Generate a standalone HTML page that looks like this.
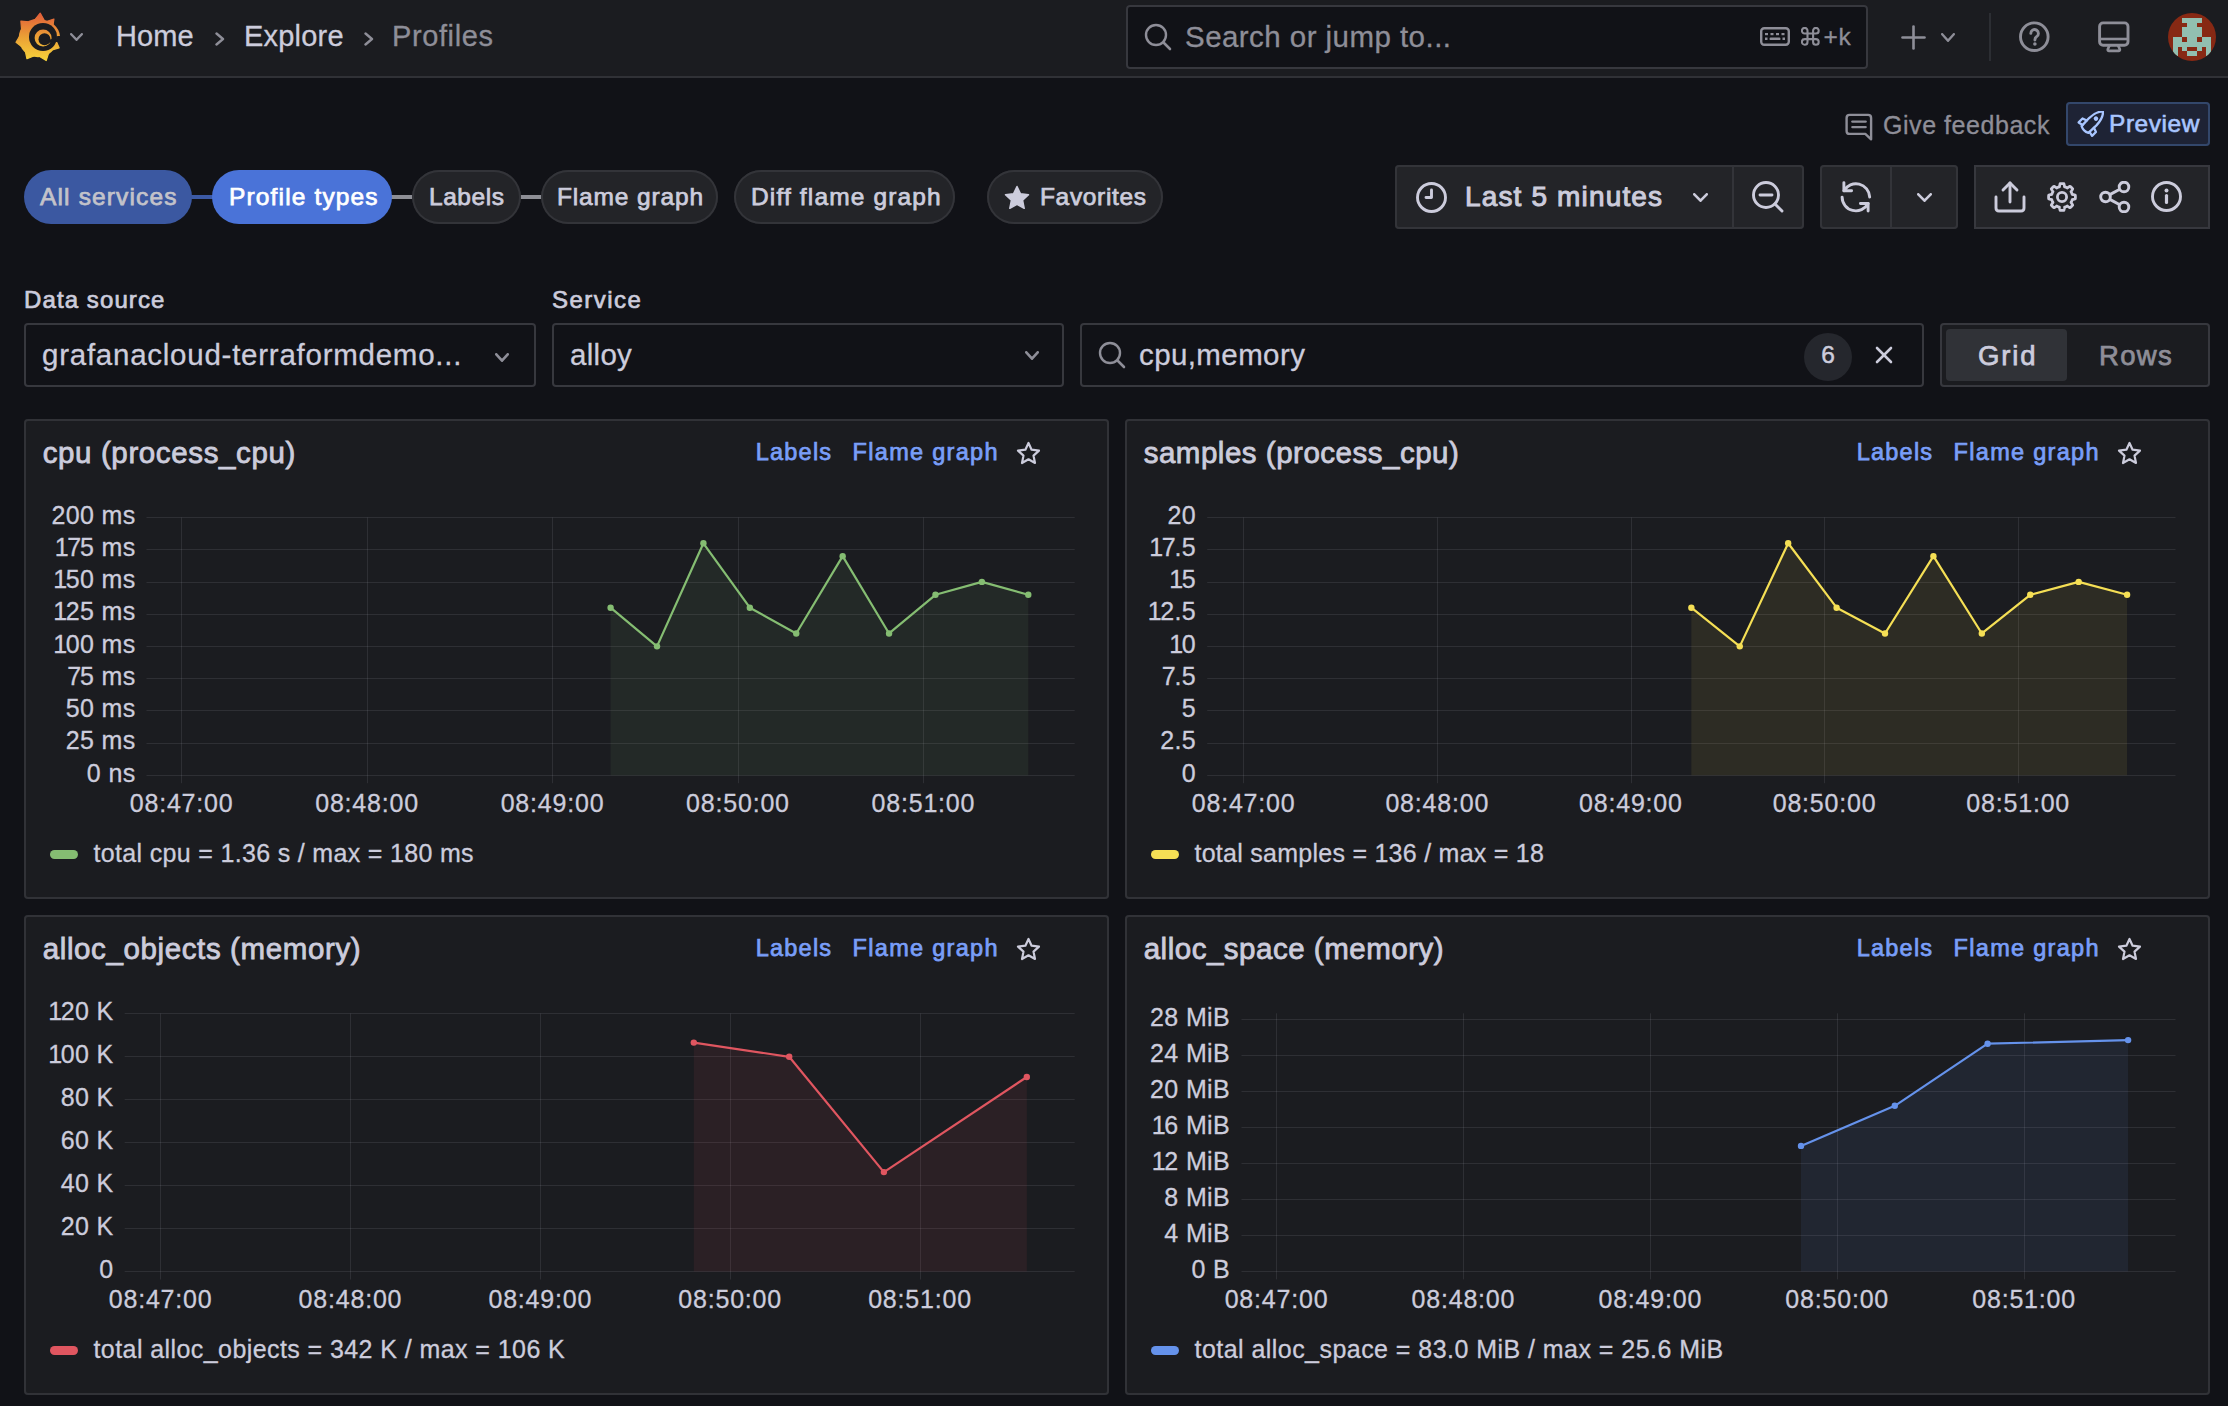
<!DOCTYPE html><html><head><meta charset="utf-8"><style>html,body{margin:0;padding:0;}body{width:2228px;height:1406px;overflow:hidden;background:#111217;position:relative;font-family:"Liberation Sans",sans-serif;}.t{position:absolute;white-space:pre;}.b{position:absolute;box-sizing:border-box;}</style></head><body>
<div class="b" style="left:0px;top:0px;width:2228px;height:76px;background:#1b1c20;border-radius:0px;"></div>
<div class="b" style="left:0px;top:76px;width:2228px;height:2px;background:#303136;border-radius:0px;"></div>
<svg class="b" style="left:12px;top:9px;" width="52" height="56" viewBox="0 0 52 56"><defs><linearGradient id="lg" x1="0" y1="53" x2="0" y2="3" gradientUnits="userSpaceOnUse">
<stop offset="0" stop-color="#f7d63b"/><stop offset="0.5" stop-color="#eba035"/><stop offset="1" stop-color="#e0593a"/></linearGradient></defs><g fill="url(#lg)"><polygon points="22.79,10.78 28.18,4.10 32.33,11.62" stroke="url(#lg)" stroke-width="1.2" stroke-linejoin="round"/><polygon points="34.40,12.52 41.94,10.00 40.77,17.87" stroke="url(#lg)" stroke-width="1.2" stroke-linejoin="round"/><polygon points="44.22,32.21 47.12,38.85 40.17,40.89" stroke="url(#lg)" stroke-width="1.2" stroke-linejoin="round"/><polygon points="36.61,44.15 34.21,51.55 27.61,47.43" stroke="url(#lg)" stroke-width="1.2" stroke-linejoin="round"/><polygon points="21.84,47.03 14.97,49.75 13.38,42.53" stroke="url(#lg)" stroke-width="1.2" stroke-linejoin="round"/><polygon points="9.52,37.40 4.01,33.27 7.57,27.39" stroke="url(#lg)" stroke-width="1.2" stroke-linejoin="round"/><polygon points="9.59,20.46 8.88,12.18 17.17,12.74" stroke="url(#lg)" stroke-width="1.2" stroke-linejoin="round"/><circle cx="26" cy="29" r="19.3"/><path d="M31,11.5 A17.5 17.5 0 0 1 48,27 L44.8,27 A14 14 0 0 0 31,14 Z"/></g><circle cx="31" cy="28" r="14" fill="#1b1c20"/><path d="M44.5,28 L50,28.5 L50,33 L43.5,33 Z" fill="#1b1c20"/><circle cx="31.1" cy="28.9" r="8.5" fill="url(#lg)"/><circle cx="32.5" cy="30.200000000000003" r="6.0" fill="#1b1c20"/><path d="M34.5,35.2 L39.8,32.5 L40,30 L37,31 Z" fill="#1b1c20"/></svg>
<svg class="b" style="left:70px;top:33px;" width="13" height="8" viewBox="0 0 13 8"><polyline points="1.2,1.2 6.5,6.8 11.8,1.2" fill="none" stroke="#8e8e98" stroke-width="2.4" stroke-linecap="round" stroke-linejoin="round"/></svg>
<div class="t" style="left:116px;top:22.45px;font-size:29px;line-height:29px;color:#ccccdc;font-weight:400;letter-spacing:0.1px;-webkit-text-stroke:0.3px #ccccdc;">Home</div>
<svg class="b" style="left:215px;top:32px;" width="10" height="14" viewBox="0 0 10 14"><polyline points="1.5,1.5 8,7 1.5,12.5" fill="none" stroke="#8e8e98" stroke-width="2.4" stroke-linecap="round" stroke-linejoin="round"/></svg>
<div class="t" style="left:244px;top:22.45px;font-size:29px;line-height:29px;color:#ccccdc;font-weight:400;letter-spacing:0.2px;-webkit-text-stroke:0.3px #ccccdc;">Explore</div>
<svg class="b" style="left:364px;top:32px;" width="10" height="14" viewBox="0 0 10 14"><polyline points="1.5,1.5 8,7 1.5,12.5" fill="none" stroke="#8e8e98" stroke-width="2.4" stroke-linecap="round" stroke-linejoin="round"/></svg>
<div class="t" style="left:392px;top:22.45px;font-size:29px;line-height:29px;color:#8e8e98;font-weight:400;letter-spacing:0.6px;-webkit-text-stroke:0.3px #8e8e98;">Profiles</div>
<div class="b" style="left:1126px;top:5px;width:742px;height:64px;background:#111217;border-radius:4px;box-shadow:inset 0 0 0 2px #37383e;"></div>
<svg class="b" style="left:1144px;top:23px;" width="28" height="28" viewBox="0 0 28 28"><circle cx="12" cy="12" r="10" fill="none" stroke="#8e8e98" stroke-width="2.4"/><line x1="19.5" y1="19.5" x2="26" y2="26" stroke="#8e8e98" stroke-width="2.6" stroke-linecap="round"/></svg>
<div class="t" style="left:1185px;top:22.03px;font-size:29.5px;line-height:29.5px;color:#8e8e98;font-weight:400;letter-spacing:0.45px;-webkit-text-stroke:0.3px #8e8e98;">Search or jump to...</div>
<svg class="b" style="left:1760px;top:27px;" width="30" height="19" viewBox="0 0 30 19"><rect x="1.2" y="1.2" width="27.6" height="16.6" rx="3" fill="none" stroke="#8e8e98" stroke-width="2.4"/><rect x="5.0" y="6" width="3" height="2.2" fill="#8e8e98"/><rect x="10.5" y="6" width="3" height="2.2" fill="#8e8e98"/><rect x="16.0" y="6" width="3" height="2.2" fill="#8e8e98"/><rect x="21.5" y="6" width="3" height="2.2" fill="#8e8e98"/><rect x="9.5" y="10.5" width="11" height="2.6" rx="1.2" fill="#8e8e98"/><rect x="5" y="10.5" width="2.5" height="2.5" fill="#8e8e98"/><rect x="22.5" y="10.5" width="2.5" height="2.5" fill="#8e8e98"/></svg>
<svg class="b" style="left:1801px;top:27px;" width="19" height="19" viewBox="0 0 19 19"><path d="M6.5 6.5 V3.7 A2.8 2.8 0 1 0 3.7 6.5 H6.5 M12.1 6.5 V3.7 A2.8 2.8 0 1 1 14.9 6.5 H12.1 M12.1 12.1 V14.9 A2.8 2.8 0 1 0 14.9 12.1 H12.1 M6.5 12.1 V14.9 A2.8 2.8 0 1 1 3.7 12.1 H6.5 M6.5 6.5 H12.1 V12.1 H6.5 Z" fill="none" stroke="#8e8e98" stroke-width="2.1"/></svg>
<div class="t" style="left:1823.5px;top:24.56px;font-size:24.5px;line-height:24.5px;color:#8e8e98;font-weight:400;letter-spacing:0.6px;-webkit-text-stroke:0.3px #8e8e98;">+k</div>
<svg class="b" style="left:1901px;top:25px;" width="25" height="25" viewBox="0 0 25 25"><line x1="12.5" y1="1.5" x2="12.5" y2="23.5" stroke="#8e8e98" stroke-width="2.6" stroke-linecap="round"/><line x1="1.5" y1="12.5" x2="23.5" y2="12.5" stroke="#8e8e98" stroke-width="2.6" stroke-linecap="round"/></svg>
<svg class="b" style="left:1941px;top:33px;" width="14" height="9" viewBox="0 0 14 9"><polyline points="1.2,1.2 7.0,7.8 12.8,1.2" fill="none" stroke="#8e8e98" stroke-width="2.4" stroke-linecap="round" stroke-linejoin="round"/></svg>
<div class="b" style="left:1989px;top:13px;width:2px;height:48px;background:#2c2e33;border-radius:0px;"></div>
<svg class="b" style="left:2019px;top:21px;" width="31" height="31" viewBox="0 0 31 31"><circle cx="15.3" cy="15.7" r="13.8" fill="none" stroke="#8e8e98" stroke-width="2.9"/><path d="M11.8 12.4 A3.8 3.8 0 1 1 17.5 15.7 C16.4 16.4 15.9 17.1 15.9 19.0" fill="none" stroke="#8e8e98" stroke-width="2.9" stroke-linecap="round"/><circle cx="15.9" cy="23.0" r="1.8" fill="#8e8e98"/></svg>
<svg class="b" style="left:2098px;top:21px;" width="32" height="32" viewBox="0 0 32 32"><rect x="1.6" y="1.9" width="28.4" height="22.4" rx="3.5" fill="none" stroke="#8e8e98" stroke-width="2.9"/><line x1="2" y1="18" x2="29.5" y2="18" stroke="#8e8e98" stroke-width="2.6"/><path d="M11.5 24.5 L9.8 28.3 Q9.5 29.8 11 29.8 H20.6 Q22.1 29.8 21.8 28.3 L20.1 24.5" fill="none" stroke="#8e8e98" stroke-width="2.7" stroke-linejoin="round"/></svg>
<svg class="b" style="left:2168px;top:13px;" width="48" height="48" viewBox="0 0 48 48"><defs><clipPath id="avc"><circle cx="24" cy="24" r="24"/></clipPath></defs><g clip-path="url(#avc)"><rect width="48" height="48" fill="#872914"/><rect x="14.40" y="4.80" width="19.20" height="4.80" fill="#92bfb0" shape-rendering="crispEdges"/><rect x="19.20" y="9.60" width="9.60" height="4.80" fill="#92bfb0" shape-rendering="crispEdges"/><rect x="14.40" y="14.40" width="19.20" height="4.80" fill="#92bfb0" shape-rendering="crispEdges"/><rect x="14.40" y="19.20" width="19.20" height="4.80" fill="#92bfb0" shape-rendering="crispEdges"/><rect x="4.80" y="24.00" width="9.60" height="4.80" fill="#92bfb0" shape-rendering="crispEdges"/><rect x="19.20" y="24.00" width="9.60" height="4.80" fill="#92bfb0" shape-rendering="crispEdges"/><rect x="33.60" y="24.00" width="9.60" height="4.80" fill="#92bfb0" shape-rendering="crispEdges"/><rect x="4.80" y="28.80" width="38.40" height="4.80" fill="#92bfb0" shape-rendering="crispEdges"/><rect x="4.80" y="33.60" width="4.80" height="4.80" fill="#92bfb0" shape-rendering="crispEdges"/><rect x="14.40" y="33.60" width="4.80" height="4.80" fill="#92bfb0" shape-rendering="crispEdges"/><rect x="28.80" y="33.60" width="4.80" height="4.80" fill="#92bfb0" shape-rendering="crispEdges"/><rect x="38.40" y="33.60" width="4.80" height="4.80" fill="#92bfb0" shape-rendering="crispEdges"/><rect x="4.80" y="38.40" width="4.80" height="4.80" fill="#92bfb0" shape-rendering="crispEdges"/><rect x="19.20" y="38.40" width="9.60" height="4.80" fill="#92bfb0" shape-rendering="crispEdges"/><rect x="38.40" y="38.40" width="4.80" height="4.80" fill="#92bfb0" shape-rendering="crispEdges"/></g></svg>
<svg class="b" style="left:1845px;top:112px;" width="28" height="29" viewBox="0 0 28 29"><path d="M4.6 2.9 H23.1 Q26.1 2.9 26.1 5.9 V27.3 L20.3 21.9 H4.6 Q1.6 21.9 1.6 18.9 V5.9 Q1.6 2.9 4.6 2.9 Z" fill="none" stroke="#8e8e98" stroke-width="2.4" stroke-linejoin="round"/><line x1="7.4" y1="9.6" x2="20.6" y2="9.6" stroke="#8e8e98" stroke-width="2.4" stroke-linecap="round"/><line x1="7.4" y1="15.1" x2="20.6" y2="15.1" stroke="#8e8e98" stroke-width="2.4" stroke-linecap="round"/></svg>
<div class="t" style="left:1883px;top:112.84px;font-size:25px;line-height:25px;color:#8e8e98;font-weight:400;letter-spacing:0.55px;-webkit-text-stroke:0.3px #8e8e98;">Give feedback</div>
<div class="b" style="left:2066px;top:102px;width:144px;height:44px;background:#1e2335;border-radius:4px;box-shadow:inset 0 0 0 2px #33476b;"></div>
<svg class="b" style="left:2077px;top:111px;" width="27" height="27" viewBox="0 0 27 27"><g transform="translate(8,18.5) rotate(-45)" fill="none" stroke="#a9c6ff" stroke-width="2.3" stroke-linejoin="round" stroke-linecap="round"><path d="M0 -4.8 L11 -5.2 Q21 -4.8 25.5 0 Q21 4.8 11 5.2 L0 4.8 Q-2.5 0 0 -4.8 Z"/><path d="M1.5 -4.9 L0.5 -9.5 L6 -9.5 L7.5 -5.1"/><path d="M1.5 4.9 L0.5 9.5 L6 9.5 L7.5 5.1"/><circle cx="15.5" cy="0" r="1.1" fill="#a9c6ff"/></g></svg>
<div class="t" style="left:2109px;top:111.76px;font-size:24.5px;line-height:24.5px;color:#a9c6ff;font-weight:400;letter-spacing:0.55px;-webkit-text-stroke:0.6px #a9c6ff;">Preview</div>
<div class="b" style="left:190px;top:195px;width:24px;height:4px;background:#3c5aa6;border-radius:0px;"></div>
<div class="b" style="left:390px;top:195px;width:24px;height:4px;background:#8d8e95;border-radius:0px;"></div>
<div class="b" style="left:519px;top:195px;width:24px;height:4px;background:#8d8e95;border-radius:0px;"></div>
<div class="b" style="left:24px;top:170px;width:168px;height:54px;background:#3b58a1;border-radius:27px;"></div>
<div class="t" style="left:40px;top:184.56px;font-size:24.5px;line-height:24.5px;color:#c3c3ca;font-weight:400;letter-spacing:1.15px;-webkit-text-stroke:0.75px #c3c3ca;">All services</div>
<div class="b" style="left:212px;top:170px;width:180px;height:54px;background:#4a73d8;border-radius:27px;"></div>
<div class="t" style="left:229px;top:184.56px;font-size:24.5px;line-height:24.5px;color:#ffffff;font-weight:400;letter-spacing:1.15px;-webkit-text-stroke:0.75px #ffffff;">Profile types</div>
<div class="b" style="left:412px;top:170px;width:109px;height:54px;background:#232428;border-radius:27px;box-shadow:inset 0 0 0 2px #333439;"></div>
<div class="t" style="left:429px;top:184.56px;font-size:24.5px;line-height:24.5px;color:#ccccdc;font-weight:400;letter-spacing:0.55px;-webkit-text-stroke:0.75px #ccccdc;">Labels</div>
<div class="b" style="left:541px;top:170px;width:177px;height:54px;background:#232428;border-radius:27px;box-shadow:inset 0 0 0 2px #333439;"></div>
<div class="t" style="left:557px;top:184.56px;font-size:24.5px;line-height:24.5px;color:#ccccdc;font-weight:400;letter-spacing:0.85px;-webkit-text-stroke:0.75px #ccccdc;">Flame graph</div>
<div class="b" style="left:734px;top:170px;width:221px;height:54px;background:#232428;border-radius:27px;box-shadow:inset 0 0 0 2px #333439;"></div>
<div class="t" style="left:751px;top:184.56px;font-size:24.5px;line-height:24.5px;color:#ccccdc;font-weight:400;letter-spacing:1.15px;-webkit-text-stroke:0.75px #ccccdc;">Diff flame graph</div>
<div class="b" style="left:987px;top:170px;width:176px;height:54px;background:#232428;border-radius:27px;box-shadow:inset 0 0 0 2px #333439;"></div>
<svg class="b" style="left:1004px;top:184.7px;" width="26" height="25" viewBox="0 0 26 25"><polygon points="13,1.5 16.5,8.8 24.5,9.8 18.6,15.3 20.2,23.3 13,19.3 5.8,23.3 7.4,15.3 1.5,9.8 9.5,8.8" fill="#ccccdc" stroke="#ccccdc" stroke-width="1.5" stroke-linejoin="round"/></svg>
<div class="t" style="left:1040px;top:184.56px;font-size:24.5px;line-height:24.5px;color:#ccccdc;font-weight:400;letter-spacing:0.65px;-webkit-text-stroke:0.75px #ccccdc;">Favorites</div>
<div class="b" style="left:1395px;top:165px;width:409px;height:64px;background:#232428;border-radius:4px;box-shadow:inset 0 0 0 2px #333439;"></div>
<div class="b" style="left:1732px;top:167px;width:2px;height:60px;background:#333439;border-radius:0px;"></div>
<svg class="b" style="left:1416px;top:182px;" width="31" height="31" viewBox="0 0 31 31"><circle cx="15.5" cy="15.5" r="14" fill="none" stroke="#ccccdc" stroke-width="2.9"/><polyline points="15.5,8 15.5,15.5 10,15.5" fill="none" stroke="#ccccdc" stroke-width="2.9" stroke-linecap="round" stroke-linejoin="round"/></svg>
<div class="t" style="left:1465px;top:183.30px;font-size:28px;line-height:28px;color:#ccccdc;font-weight:400;letter-spacing:1.15px;-webkit-text-stroke:1.0px #ccccdc;">Last 5 minutes</div>
<svg class="b" style="left:1693px;top:193px;" width="15" height="9" viewBox="0 0 15 9"><polyline points="1.3,1.3 7.5,7.7 13.7,1.3" fill="none" stroke="#ccccdc" stroke-width="2.6" stroke-linecap="round" stroke-linejoin="round"/></svg>
<svg class="b" style="left:1752px;top:181px;" width="32" height="32" viewBox="0 0 32 32"><circle cx="14" cy="14" r="12.5" fill="none" stroke="#ccccdc" stroke-width="2.9"/><line x1="8" y1="14" x2="20" y2="14" stroke="#ccccdc" stroke-width="2.9" stroke-linecap="round"/><line x1="23" y1="23" x2="30" y2="30" stroke="#ccccdc" stroke-width="2.9" stroke-linecap="round"/></svg>
<div class="b" style="left:1820px;top:165px;width:138px;height:64px;background:#232428;border-radius:4px;box-shadow:inset 0 0 0 2px #333439;"></div>
<div class="b" style="left:1890px;top:167px;width:2px;height:60px;background:#333439;border-radius:0px;"></div>
<svg class="b" style="left:1840px;top:181px;" width="32" height="32" viewBox="0 0 32 32"><g fill="none" stroke="#ccccdc" stroke-width="2.9" stroke-linecap="round" stroke-linejoin="round"><path d="M3.9 9.8 A13.8 13.8 0 0 1 29.7 16.1"/><path d="M2.1 16.1 A13.8 13.8 0 0 0 28.1 22.5"/><polyline points="3.9,1.6 3.9,9.8 11.6,9.8"/><polyline points="20.4,22.5 28.1,22.5 28.1,30.0"/></g></svg>
<svg class="b" style="left:1917px;top:193px;" width="15" height="9" viewBox="0 0 15 9"><polyline points="1.3,1.3 7.5,7.7 13.7,1.3" fill="none" stroke="#ccccdc" stroke-width="2.6" stroke-linecap="round" stroke-linejoin="round"/></svg>
<div class="b" style="left:1974px;top:165px;width:236px;height:64px;background:#232428;border-radius:0px;box-shadow:inset 0 0 0 2px #37383e;"></div>
<svg class="b" style="left:1994px;top:180px;" width="32" height="33" viewBox="0 0 32 33"><g fill="none" stroke="#ccccdc" stroke-width="2.9" stroke-linecap="round" stroke-linejoin="round"><path d="M2 17 V28 Q2 31 5 31 H27 Q30 31 30 28 V17"/><line x1="16" y1="3" x2="16" y2="22"/><polyline points="9,10 16,3 23,10"/></g></svg>
<svg class="b" style="left:2046px;top:181px;" width="32" height="32" viewBox="0 0 32 32"><g fill="none" stroke="#ccccdc" stroke-width="2.8" stroke-linejoin="round"><polygon points="29.40,16.00 29.40,16.23 29.39,16.47 29.38,16.70 29.37,16.93 29.35,17.17 29.33,17.40 29.30,17.63 29.27,17.86 28.76,18.02 28.24,18.16 27.73,18.28 27.22,18.38 26.70,18.47 26.19,18.54 26.14,18.72 26.09,18.89 26.04,19.07 25.99,19.24 25.93,19.42 25.87,19.59 25.80,19.76 25.74,19.93 25.67,20.10 25.59,20.27 25.52,20.44 25.44,20.60 25.36,20.77 25.27,20.93 25.18,21.09 25.09,21.25 25.00,21.41 25.31,21.82 25.62,22.25 25.91,22.68 26.18,23.13 26.45,23.59 26.70,24.06 26.56,24.25 26.41,24.43 26.26,24.61 26.11,24.79 25.96,24.97 25.80,25.14 25.64,25.31 25.48,25.48 25.31,25.64 25.14,25.80 24.97,25.96 24.79,26.11 24.61,26.26 24.43,26.41 24.25,26.56 24.06,26.70 23.59,26.45 23.13,26.18 22.68,25.91 22.25,25.62 21.82,25.31 21.41,25.00 21.25,25.09 21.09,25.18 20.93,25.27 20.77,25.36 20.60,25.44 20.44,25.52 20.27,25.59 20.10,25.67 19.93,25.74 19.76,25.80 19.59,25.87 19.42,25.93 19.24,25.99 19.07,26.04 18.89,26.09 18.72,26.14 18.54,26.19 18.47,26.70 18.38,27.22 18.28,27.73 18.16,28.24 18.02,28.76 17.86,29.27 17.63,29.30 17.40,29.33 17.17,29.35 16.93,29.37 16.70,29.38 16.47,29.39 16.23,29.40 16.00,29.40 15.77,29.40 15.53,29.39 15.30,29.38 15.07,29.37 14.83,29.35 14.60,29.33 14.37,29.30 14.14,29.27 13.98,28.76 13.84,28.24 13.72,27.73 13.62,27.22 13.53,26.70 13.46,26.19 13.28,26.14 13.11,26.09 12.93,26.04 12.76,25.99 12.58,25.93 12.41,25.87 12.24,25.80 12.07,25.74 11.90,25.67 11.73,25.59 11.56,25.52 11.40,25.44 11.23,25.36 11.07,25.27 10.91,25.18 10.75,25.09 10.59,25.00 10.18,25.31 9.75,25.62 9.32,25.91 8.87,26.18 8.41,26.45 7.94,26.70 7.75,26.56 7.57,26.41 7.39,26.26 7.21,26.11 7.03,25.96 6.86,25.80 6.69,25.64 6.52,25.48 6.36,25.31 6.20,25.14 6.04,24.97 5.89,24.79 5.74,24.61 5.59,24.43 5.44,24.25 5.30,24.06 5.55,23.59 5.82,23.13 6.09,22.68 6.38,22.25 6.69,21.82 7.00,21.41 6.91,21.25 6.82,21.09 6.73,20.93 6.64,20.77 6.56,20.60 6.48,20.44 6.41,20.27 6.33,20.10 6.26,19.93 6.20,19.76 6.13,19.59 6.07,19.42 6.01,19.24 5.96,19.07 5.91,18.89 5.86,18.72 5.81,18.54 5.30,18.47 4.78,18.38 4.27,18.28 3.76,18.16 3.24,18.02 2.73,17.86 2.70,17.63 2.67,17.40 2.65,17.17 2.63,16.93 2.62,16.70 2.61,16.47 2.60,16.23 2.60,16.00 2.60,15.77 2.61,15.53 2.62,15.30 2.63,15.07 2.65,14.83 2.67,14.60 2.70,14.37 2.73,14.14 3.24,13.98 3.76,13.84 4.27,13.72 4.78,13.62 5.30,13.53 5.81,13.46 5.86,13.28 5.91,13.11 5.96,12.93 6.01,12.76 6.07,12.58 6.13,12.41 6.20,12.24 6.26,12.07 6.33,11.90 6.41,11.73 6.48,11.56 6.56,11.40 6.64,11.23 6.73,11.07 6.82,10.91 6.91,10.75 7.00,10.59 6.69,10.18 6.38,9.75 6.09,9.32 5.82,8.87 5.55,8.41 5.30,7.94 5.44,7.75 5.59,7.57 5.74,7.39 5.89,7.21 6.04,7.03 6.20,6.86 6.36,6.69 6.52,6.52 6.69,6.36 6.86,6.20 7.03,6.04 7.21,5.89 7.39,5.74 7.57,5.59 7.75,5.44 7.94,5.30 8.41,5.55 8.87,5.82 9.32,6.09 9.75,6.38 10.18,6.69 10.59,7.00 10.75,6.91 10.91,6.82 11.07,6.73 11.23,6.64 11.40,6.56 11.56,6.48 11.73,6.41 11.90,6.33 12.07,6.26 12.24,6.20 12.41,6.13 12.58,6.07 12.76,6.01 12.93,5.96 13.11,5.91 13.28,5.86 13.46,5.81 13.53,5.30 13.62,4.78 13.72,4.27 13.84,3.76 13.98,3.24 14.14,2.73 14.37,2.70 14.60,2.67 14.83,2.65 15.07,2.63 15.30,2.62 15.53,2.61 15.77,2.60 16.00,2.60 16.23,2.60 16.47,2.61 16.70,2.62 16.93,2.63 17.17,2.65 17.40,2.67 17.63,2.70 17.86,2.73 18.02,3.24 18.16,3.76 18.28,4.27 18.38,4.78 18.47,5.30 18.54,5.81 18.72,5.86 18.89,5.91 19.07,5.96 19.24,6.01 19.42,6.07 19.59,6.13 19.76,6.20 19.93,6.26 20.10,6.33 20.27,6.41 20.44,6.48 20.60,6.56 20.77,6.64 20.93,6.73 21.09,6.82 21.25,6.91 21.41,7.00 21.82,6.69 22.25,6.38 22.68,6.09 23.13,5.82 23.59,5.55 24.06,5.30 24.25,5.44 24.43,5.59 24.61,5.74 24.79,5.89 24.97,6.04 25.14,6.20 25.31,6.36 25.48,6.52 25.64,6.69 25.80,6.86 25.96,7.03 26.11,7.21 26.26,7.39 26.41,7.57 26.56,7.75 26.70,7.94 26.45,8.41 26.18,8.87 25.91,9.32 25.62,9.75 25.31,10.18 25.00,10.59 25.09,10.75 25.18,10.91 25.27,11.07 25.36,11.23 25.44,11.40 25.52,11.56 25.59,11.73 25.67,11.90 25.74,12.07 25.80,12.24 25.87,12.41 25.93,12.58 25.99,12.76 26.04,12.93 26.09,13.11 26.14,13.28 26.19,13.46 26.70,13.53 27.22,13.62 27.73,13.72 28.24,13.84 28.76,13.98 29.27,14.14 29.30,14.37 29.33,14.60 29.35,14.83 29.37,15.07 29.38,15.30 29.39,15.53 29.40,15.77"/><circle cx="16" cy="16" r="4.6"/></g></svg>
<svg class="b" style="left:2099px;top:181px;" width="32" height="32" viewBox="0 0 32 32"><g fill="none" stroke="#ccccdc" stroke-width="2.9"><circle cx="6.5" cy="16" r="4.8"/><circle cx="25" cy="6" r="4.8"/><circle cx="25" cy="26" r="4.8"/><line x1="10.8" y1="13.6" x2="20.8" y2="8.3"/><line x1="10.8" y1="18.4" x2="20.8" y2="23.7"/></g></svg>
<svg class="b" style="left:2151px;top:181px;" width="32" height="32" viewBox="0 0 32 32"><circle cx="15.5" cy="15.5" r="14" fill="none" stroke="#ccccdc" stroke-width="2.9"/><line x1="15.5" y1="14.5" x2="15.5" y2="21.5" stroke="#ccccdc" stroke-width="3.2" stroke-linecap="round"/><circle cx="15.5" cy="9.6" r="2" fill="#ccccdc"/></svg>
<div class="t" style="left:24px;top:287.68px;font-size:24px;line-height:24px;color:#ccccdc;font-weight:400;letter-spacing:1.1px;-webkit-text-stroke:0.7px #ccccdc;">Data source</div>
<div class="t" style="left:552px;top:287.68px;font-size:24px;line-height:24px;color:#ccccdc;font-weight:400;letter-spacing:1.45px;-webkit-text-stroke:0.7px #ccccdc;">Service</div>
<div class="b" style="left:24px;top:323px;width:512px;height:64px;background:#111217;border-radius:4px;box-shadow:inset 0 0 0 2px #37383e;"></div>
<div class="t" style="left:42px;top:340.03px;font-size:29.5px;line-height:29.5px;color:#ccccdc;font-weight:400;letter-spacing:0.75px;-webkit-text-stroke:0.3px #ccccdc;">grafanacloud-terraformdemo...</div>
<svg class="b" style="left:495px;top:353px;" width="14" height="9" viewBox="0 0 14 9"><polyline points="1.3,1.3 7.0,7.7 12.7,1.3" fill="none" stroke="#8e8e98" stroke-width="2.6" stroke-linecap="round" stroke-linejoin="round"/></svg>
<div class="b" style="left:552px;top:323px;width:512px;height:64px;background:#111217;border-radius:4px;box-shadow:inset 0 0 0 2px #37383e;"></div>
<div class="t" style="left:570px;top:340.03px;font-size:29.5px;line-height:29.5px;color:#ccccdc;font-weight:400;letter-spacing:0.3px;-webkit-text-stroke:0.3px #ccccdc;">alloy</div>
<svg class="b" style="left:1025px;top:351px;" width="14" height="9" viewBox="0 0 14 9"><polyline points="1.3,1.3 7.0,7.7 12.7,1.3" fill="none" stroke="#8e8e98" stroke-width="2.6" stroke-linecap="round" stroke-linejoin="round"/></svg>
<div class="b" style="left:1080px;top:323px;width:844px;height:64px;background:#111217;border-radius:4px;box-shadow:inset 0 0 0 2px #37383e;"></div>
<svg class="b" style="left:1098px;top:341px;" width="28" height="28" viewBox="0 0 28 28"><circle cx="12" cy="12" r="10" fill="none" stroke="#8e8e98" stroke-width="2.4"/><line x1="19.5" y1="19.5" x2="26" y2="26" stroke="#8e8e98" stroke-width="2.6" stroke-linecap="round"/></svg>
<div class="t" style="left:1139px;top:340.03px;font-size:29.5px;line-height:29.5px;color:#ccccdc;font-weight:400;letter-spacing:0.4px;-webkit-text-stroke:0.3px #ccccdc;">cpu,memory</div>
<div class="b" style="left:1804px;top:333px;width:48px;height:48px;background:#25272d;border-radius:24px;"></div>
<div class="t" style="left:1528px;width:600px;top:343.26px;font-size:24.5px;line-height:24.5px;color:#ccccdc;font-weight:400;text-align:center;-webkit-text-stroke:0.5px #ccccdc;">6</div>
<svg class="b" style="left:1875px;top:346px;" width="18" height="18" viewBox="0 0 18 18"><g stroke="#ccccdc" stroke-width="2.6" stroke-linecap="round"><line x1="2" y1="2" x2="16" y2="16"/><line x1="16" y1="2" x2="2" y2="16"/></g></svg>
<div class="b" style="left:1940px;top:323px;width:270px;height:64px;background:#1b1c20;border-radius:4px;box-shadow:inset 0 0 0 2px #37383e;"></div>
<div class="b" style="left:1946px;top:329px;width:121px;height:52px;background:#303237;border-radius:4px;"></div>
<div class="t" style="left:1978px;top:341.72px;font-size:27.5px;line-height:27.5px;color:#ccccdc;font-weight:400;letter-spacing:1.85px;-webkit-text-stroke:0.75px #ccccdc;">Grid</div>
<div class="t" style="left:2099px;top:341.72px;font-size:27.5px;line-height:27.5px;color:#8e8e98;font-weight:400;letter-spacing:1.35px;-webkit-text-stroke:0.75px #8e8e98;">Rows</div>
<div class="b" style="left:24px;top:419px;width:1085px;height:480px;background:#1b1c20;border-radius:4px;box-shadow:inset 0 0 0 2px #313237;"></div>
<div class="t" style="left:42.7px;top:438.03px;font-size:29.5px;line-height:29.5px;color:#ccccdc;font-weight:400;letter-spacing:0.62px;-webkit-text-stroke:0.8px #ccccdc;">cpu (process_cpu)</div>
<div class="t" style="left:755.8px;top:440.81px;font-size:23.5px;line-height:23.5px;color:#799ef8;font-weight:400;letter-spacing:1.2px;-webkit-text-stroke:0.75px #799ef8;">Labels</div>
<div class="t" style="left:852.6px;top:440.81px;font-size:23.5px;line-height:23.5px;color:#799ef8;font-weight:400;letter-spacing:1.3px;-webkit-text-stroke:0.75px #799ef8;">Flame graph</div>
<svg class="b" style="left:1016px;top:441px;" width="25" height="24" viewBox="0 0 25 24"><polygon points="12.5,2 15.6,8.7 23,9.6 17.5,14.6 19,22 12.5,18.3 6,22 7.5,14.6 2,9.6 9.4,8.7" fill="none" stroke="#ccccdc" stroke-width="2.2" stroke-linejoin="round"/></svg>
<svg class="b" style="left:24px;top:419px;" width="1085" height="480" viewBox="0 0 1085 480"><line x1="122.5" y1="98.50" x2="1050.7" y2="98.50" stroke="rgba(200,205,215,0.11)" stroke-width="1"/><line x1="122.5" y1="130.50" x2="1050.7" y2="130.50" stroke="rgba(200,205,215,0.11)" stroke-width="1"/><line x1="122.5" y1="163.50" x2="1050.7" y2="163.50" stroke="rgba(200,205,215,0.11)" stroke-width="1"/><line x1="122.5" y1="195.50" x2="1050.7" y2="195.50" stroke="rgba(200,205,215,0.11)" stroke-width="1"/><line x1="122.5" y1="227.50" x2="1050.7" y2="227.50" stroke="rgba(200,205,215,0.11)" stroke-width="1"/><line x1="122.5" y1="259.50" x2="1050.7" y2="259.50" stroke="rgba(200,205,215,0.11)" stroke-width="1"/><line x1="122.5" y1="291.50" x2="1050.7" y2="291.50" stroke="rgba(200,205,215,0.11)" stroke-width="1"/><line x1="122.5" y1="324.50" x2="1050.7" y2="324.50" stroke="rgba(200,205,215,0.11)" stroke-width="1"/><line x1="122.5" y1="356.50" x2="1050.7" y2="356.50" stroke="rgba(200,205,215,0.11)" stroke-width="1"/><line x1="157.50" y1="98.5" x2="157.50" y2="364.20000000000005" stroke="rgba(200,205,215,0.11)" stroke-width="1"/><line x1="343.50" y1="98.5" x2="343.50" y2="364.20000000000005" stroke="rgba(200,205,215,0.11)" stroke-width="1"/><line x1="528.50" y1="98.5" x2="528.50" y2="364.20000000000005" stroke="rgba(200,205,215,0.11)" stroke-width="1"/><line x1="714.50" y1="98.5" x2="714.50" y2="364.20000000000005" stroke="rgba(200,205,215,0.11)" stroke-width="1"/><line x1="899.50" y1="98.5" x2="899.50" y2="364.20000000000005" stroke="rgba(200,205,215,0.11)" stroke-width="1"/><path d="M586.60,356.20 L586.60,188.70 L633.01,227.35 L679.42,124.27 L725.83,188.70 L772.24,214.47 L818.65,137.15 L865.06,214.47 L911.47,175.81 L957.88,162.92 L1004.29,175.81 L1004.29,356.20 Z" fill="rgba(133,189,114,0.085)"/><polyline points="586.60,188.70 633.01,227.35 679.42,124.27 725.83,188.70 772.24,214.47 818.65,137.15 865.06,214.47 911.47,175.81 957.88,162.92 1004.29,175.81" fill="none" stroke="#85bd72" stroke-width="2.2" stroke-linejoin="round"/><circle cx="586.60" cy="188.70" r="3.2" fill="#85bd72"/><circle cx="633.01" cy="227.35" r="3.2" fill="#85bd72"/><circle cx="679.42" cy="124.27" r="3.2" fill="#85bd72"/><circle cx="725.83" cy="188.70" r="3.2" fill="#85bd72"/><circle cx="772.24" cy="214.47" r="3.2" fill="#85bd72"/><circle cx="818.65" cy="137.15" r="3.2" fill="#85bd72"/><circle cx="865.06" cy="214.47" r="3.2" fill="#85bd72"/><circle cx="911.47" cy="175.81" r="3.2" fill="#85bd72"/><circle cx="957.88" cy="162.92" r="3.2" fill="#85bd72"/><circle cx="1004.29" cy="175.81" r="3.2" fill="#85bd72"/></svg>
<div class="t" style="right:2092.5px;top:502.84px;font-size:25px;line-height:25px;color:#ccccdc;font-weight:400;text-align:right;letter-spacing:0.35px;-webkit-text-stroke:0.3px #ccccdc;">200 ms</div>
<div class="t" style="right:2092.5px;top:535.05px;font-size:25px;line-height:25px;color:#ccccdc;font-weight:400;text-align:right;letter-spacing:0.35px;-webkit-text-stroke:0.3px #ccccdc;"><span style="letter-spacing:-1.4px">1</span><span style="letter-spacing:-1.2px">7</span>5 ms</div>
<div class="t" style="right:2092.5px;top:567.26px;font-size:25px;line-height:25px;color:#ccccdc;font-weight:400;text-align:right;letter-spacing:0.35px;-webkit-text-stroke:0.3px #ccccdc;"><span style="letter-spacing:-1.4px">1</span>50 ms</div>
<div class="t" style="right:2092.5px;top:599.48px;font-size:25px;line-height:25px;color:#ccccdc;font-weight:400;text-align:right;letter-spacing:0.35px;-webkit-text-stroke:0.3px #ccccdc;"><span style="letter-spacing:-1.4px">1</span>25 ms</div>
<div class="t" style="right:2092.5px;top:631.69px;font-size:25px;line-height:25px;color:#ccccdc;font-weight:400;text-align:right;letter-spacing:0.35px;-webkit-text-stroke:0.3px #ccccdc;"><span style="letter-spacing:-1.4px">1</span>00 ms</div>
<div class="t" style="right:2092.5px;top:663.90px;font-size:25px;line-height:25px;color:#ccccdc;font-weight:400;text-align:right;letter-spacing:0.35px;-webkit-text-stroke:0.3px #ccccdc;"><span style="letter-spacing:-1.2px">7</span>5 ms</div>
<div class="t" style="right:2092.5px;top:696.11px;font-size:25px;line-height:25px;color:#ccccdc;font-weight:400;text-align:right;letter-spacing:0.35px;-webkit-text-stroke:0.3px #ccccdc;">50 ms</div>
<div class="t" style="right:2092.5px;top:728.33px;font-size:25px;line-height:25px;color:#ccccdc;font-weight:400;text-align:right;letter-spacing:0.35px;-webkit-text-stroke:0.3px #ccccdc;">25 ms</div>
<div class="t" style="right:2092.5px;top:760.54px;font-size:25px;line-height:25px;color:#ccccdc;font-weight:400;text-align:right;letter-spacing:0.35px;-webkit-text-stroke:0.3px #ccccdc;">0 ns</div>
<div class="t" style="left:-118.4px;width:600px;top:790.84px;font-size:25px;line-height:25px;color:#ccccdc;font-weight:400;text-align:center;letter-spacing:0.8px;-webkit-text-stroke:0.3px #ccccdc;">08:47:00</div>
<div class="t" style="left:67.04999999999995px;width:600px;top:790.84px;font-size:25px;line-height:25px;color:#ccccdc;font-weight:400;text-align:center;letter-spacing:0.8px;-webkit-text-stroke:0.3px #ccccdc;">08:48:00</div>
<div class="t" style="left:252.5px;width:600px;top:790.84px;font-size:25px;line-height:25px;color:#ccccdc;font-weight:400;text-align:center;letter-spacing:0.8px;-webkit-text-stroke:0.3px #ccccdc;">08:49:00</div>
<div class="t" style="left:437.94999999999993px;width:600px;top:790.84px;font-size:25px;line-height:25px;color:#ccccdc;font-weight:400;text-align:center;letter-spacing:0.8px;-webkit-text-stroke:0.3px #ccccdc;">08:50:00</div>
<div class="t" style="left:623.4px;width:600px;top:790.84px;font-size:25px;line-height:25px;color:#ccccdc;font-weight:400;text-align:center;letter-spacing:0.8px;-webkit-text-stroke:0.3px #ccccdc;">08:51:00</div>
<div class="b" style="left:50px;top:849.6px;width:28px;height:9px;background:#85bd72;border-radius:4.5px;"></div>
<div class="t" style="left:93.5px;top:841.04px;font-size:25px;line-height:25px;color:#ccccdc;font-weight:400;letter-spacing:0.325px;-webkit-text-stroke:0.3px #ccccdc;">total cpu = 1.36 s / max = 180 ms</div>
<div class="b" style="left:1125px;top:419px;width:1085px;height:480px;background:#1b1c20;border-radius:4px;box-shadow:inset 0 0 0 2px #313237;"></div>
<div class="t" style="left:1143.7px;top:438.03px;font-size:29.5px;line-height:29.5px;color:#ccccdc;font-weight:400;letter-spacing:0.51px;-webkit-text-stroke:0.8px #ccccdc;">samples (process_cpu)</div>
<div class="t" style="left:1856.8px;top:440.81px;font-size:23.5px;line-height:23.5px;color:#799ef8;font-weight:400;letter-spacing:1.2px;-webkit-text-stroke:0.75px #799ef8;">Labels</div>
<div class="t" style="left:1953.6px;top:440.81px;font-size:23.5px;line-height:23.5px;color:#799ef8;font-weight:400;letter-spacing:1.3px;-webkit-text-stroke:0.75px #799ef8;">Flame graph</div>
<svg class="b" style="left:2117px;top:441px;" width="25" height="24" viewBox="0 0 25 24"><polygon points="12.5,2 15.6,8.7 23,9.6 17.5,14.6 19,22 12.5,18.3 6,22 7.5,14.6 2,9.6 9.4,8.7" fill="none" stroke="#ccccdc" stroke-width="2.2" stroke-linejoin="round"/></svg>
<svg class="b" style="left:1125px;top:419px;" width="1085" height="480" viewBox="0 0 1085 480"><line x1="82.20000000000005" y1="98.50" x2="1050.5" y2="98.50" stroke="rgba(200,205,215,0.11)" stroke-width="1"/><line x1="82.20000000000005" y1="130.50" x2="1050.5" y2="130.50" stroke="rgba(200,205,215,0.11)" stroke-width="1"/><line x1="82.20000000000005" y1="163.50" x2="1050.5" y2="163.50" stroke="rgba(200,205,215,0.11)" stroke-width="1"/><line x1="82.20000000000005" y1="195.50" x2="1050.5" y2="195.50" stroke="rgba(200,205,215,0.11)" stroke-width="1"/><line x1="82.20000000000005" y1="227.50" x2="1050.5" y2="227.50" stroke="rgba(200,205,215,0.11)" stroke-width="1"/><line x1="82.20000000000005" y1="259.50" x2="1050.5" y2="259.50" stroke="rgba(200,205,215,0.11)" stroke-width="1"/><line x1="82.20000000000005" y1="291.50" x2="1050.5" y2="291.50" stroke="rgba(200,205,215,0.11)" stroke-width="1"/><line x1="82.20000000000005" y1="324.50" x2="1050.5" y2="324.50" stroke="rgba(200,205,215,0.11)" stroke-width="1"/><line x1="82.20000000000005" y1="356.50" x2="1050.5" y2="356.50" stroke="rgba(200,205,215,0.11)" stroke-width="1"/><line x1="118.50" y1="98.5" x2="118.50" y2="364.20000000000005" stroke="rgba(200,205,215,0.11)" stroke-width="1"/><line x1="312.50" y1="98.5" x2="312.50" y2="364.20000000000005" stroke="rgba(200,205,215,0.11)" stroke-width="1"/><line x1="506.50" y1="98.5" x2="506.50" y2="364.20000000000005" stroke="rgba(200,205,215,0.11)" stroke-width="1"/><line x1="699.50" y1="98.5" x2="699.50" y2="364.20000000000005" stroke="rgba(200,205,215,0.11)" stroke-width="1"/><line x1="893.50" y1="98.5" x2="893.50" y2="364.20000000000005" stroke="rgba(200,205,215,0.11)" stroke-width="1"/><path d="M566.35,356.20 L566.35,188.70 L614.77,227.35 L663.18,124.27 L711.60,188.70 L760.01,214.47 L808.43,137.15 L856.84,214.47 L905.26,175.81 L953.67,162.92 L1002.09,175.81 L1002.09,356.20 Z" fill="rgba(245,223,85,0.085)"/><polyline points="566.35,188.70 614.77,227.35 663.18,124.27 711.60,188.70 760.01,214.47 808.43,137.15 856.84,214.47 905.26,175.81 953.67,162.92 1002.09,175.81" fill="none" stroke="#f5df55" stroke-width="2.2" stroke-linejoin="round"/><circle cx="566.35" cy="188.70" r="3.2" fill="#f5df55"/><circle cx="614.77" cy="227.35" r="3.2" fill="#f5df55"/><circle cx="663.18" cy="124.27" r="3.2" fill="#f5df55"/><circle cx="711.60" cy="188.70" r="3.2" fill="#f5df55"/><circle cx="760.01" cy="214.47" r="3.2" fill="#f5df55"/><circle cx="808.43" cy="137.15" r="3.2" fill="#f5df55"/><circle cx="856.84" cy="214.47" r="3.2" fill="#f5df55"/><circle cx="905.26" cy="175.81" r="3.2" fill="#f5df55"/><circle cx="953.67" cy="162.92" r="3.2" fill="#f5df55"/><circle cx="1002.09" cy="175.81" r="3.2" fill="#f5df55"/></svg>
<div class="t" style="right:1032px;top:502.84px;font-size:25px;line-height:25px;color:#ccccdc;font-weight:400;text-align:right;letter-spacing:0.35px;-webkit-text-stroke:0.3px #ccccdc;">20</div>
<div class="t" style="right:1032px;top:535.05px;font-size:25px;line-height:25px;color:#ccccdc;font-weight:400;text-align:right;letter-spacing:0.35px;-webkit-text-stroke:0.3px #ccccdc;"><span style="letter-spacing:-1.4px">1</span><span style="letter-spacing:-1.2px">7</span>.5</div>
<div class="t" style="right:1032px;top:567.26px;font-size:25px;line-height:25px;color:#ccccdc;font-weight:400;text-align:right;letter-spacing:0.35px;-webkit-text-stroke:0.3px #ccccdc;"><span style="letter-spacing:-1.4px">1</span>5</div>
<div class="t" style="right:1032px;top:599.48px;font-size:25px;line-height:25px;color:#ccccdc;font-weight:400;text-align:right;letter-spacing:0.35px;-webkit-text-stroke:0.3px #ccccdc;"><span style="letter-spacing:-1.4px">1</span>2.5</div>
<div class="t" style="right:1032px;top:631.69px;font-size:25px;line-height:25px;color:#ccccdc;font-weight:400;text-align:right;letter-spacing:0.35px;-webkit-text-stroke:0.3px #ccccdc;"><span style="letter-spacing:-1.4px">1</span>0</div>
<div class="t" style="right:1032px;top:663.90px;font-size:25px;line-height:25px;color:#ccccdc;font-weight:400;text-align:right;letter-spacing:0.35px;-webkit-text-stroke:0.3px #ccccdc;"><span style="letter-spacing:-1.2px">7</span>.5</div>
<div class="t" style="right:1032px;top:696.11px;font-size:25px;line-height:25px;color:#ccccdc;font-weight:400;text-align:right;letter-spacing:0.35px;-webkit-text-stroke:0.3px #ccccdc;">5</div>
<div class="t" style="right:1032px;top:728.33px;font-size:25px;line-height:25px;color:#ccccdc;font-weight:400;text-align:right;letter-spacing:0.35px;-webkit-text-stroke:0.3px #ccccdc;">2.5</div>
<div class="t" style="right:1032px;top:760.54px;font-size:25px;line-height:25px;color:#ccccdc;font-weight:400;text-align:right;letter-spacing:0.35px;-webkit-text-stroke:0.3px #ccccdc;">0</div>
<div class="t" style="left:943.5999999999999px;width:600px;top:790.84px;font-size:25px;line-height:25px;color:#ccccdc;font-weight:400;text-align:center;letter-spacing:0.8px;-webkit-text-stroke:0.3px #ccccdc;">08:47:00</div>
<div class="t" style="left:1137.25px;width:600px;top:790.84px;font-size:25px;line-height:25px;color:#ccccdc;font-weight:400;text-align:center;letter-spacing:0.8px;-webkit-text-stroke:0.3px #ccccdc;">08:48:00</div>
<div class="t" style="left:1330.8999999999999px;width:600px;top:790.84px;font-size:25px;line-height:25px;color:#ccccdc;font-weight:400;text-align:center;letter-spacing:0.8px;-webkit-text-stroke:0.3px #ccccdc;">08:49:00</div>
<div class="t" style="left:1524.55px;width:600px;top:790.84px;font-size:25px;line-height:25px;color:#ccccdc;font-weight:400;text-align:center;letter-spacing:0.8px;-webkit-text-stroke:0.3px #ccccdc;">08:50:00</div>
<div class="t" style="left:1718.1999999999998px;width:600px;top:790.84px;font-size:25px;line-height:25px;color:#ccccdc;font-weight:400;text-align:center;letter-spacing:0.8px;-webkit-text-stroke:0.3px #ccccdc;">08:51:00</div>
<div class="b" style="left:1151px;top:849.6px;width:28px;height:9px;background:#f5df55;border-radius:4.5px;"></div>
<div class="t" style="left:1194.5px;top:841.04px;font-size:25px;line-height:25px;color:#ccccdc;font-weight:400;letter-spacing:0.26px;-webkit-text-stroke:0.3px #ccccdc;">total samples = 136 / max = 18</div>
<div class="b" style="left:24px;top:915px;width:1085px;height:480px;background:#1b1c20;border-radius:4px;box-shadow:inset 0 0 0 2px #313237;"></div>
<div class="t" style="left:42.7px;top:934.03px;font-size:29.5px;line-height:29.5px;color:#ccccdc;font-weight:400;letter-spacing:0.62px;-webkit-text-stroke:0.8px #ccccdc;">alloc_objects (memory)</div>
<div class="t" style="left:755.8px;top:936.81px;font-size:23.5px;line-height:23.5px;color:#799ef8;font-weight:400;letter-spacing:1.2px;-webkit-text-stroke:0.75px #799ef8;">Labels</div>
<div class="t" style="left:852.6px;top:936.81px;font-size:23.5px;line-height:23.5px;color:#799ef8;font-weight:400;letter-spacing:1.3px;-webkit-text-stroke:0.75px #799ef8;">Flame graph</div>
<svg class="b" style="left:1016px;top:937px;" width="25" height="24" viewBox="0 0 25 24"><polygon points="12.5,2 15.6,8.7 23,9.6 17.5,14.6 19,22 12.5,18.3 6,22 7.5,14.6 2,9.6 9.4,8.7" fill="none" stroke="#ccccdc" stroke-width="2.2" stroke-linejoin="round"/></svg>
<svg class="b" style="left:24px;top:915px;" width="1085" height="480" viewBox="0 0 1085 480"><line x1="100.7" y1="98.50" x2="1050.7" y2="98.50" stroke="rgba(200,205,215,0.11)" stroke-width="1"/><line x1="100.7" y1="141.50" x2="1050.7" y2="141.50" stroke="rgba(200,205,215,0.11)" stroke-width="1"/><line x1="100.7" y1="184.50" x2="1050.7" y2="184.50" stroke="rgba(200,205,215,0.11)" stroke-width="1"/><line x1="100.7" y1="227.50" x2="1050.7" y2="227.50" stroke="rgba(200,205,215,0.11)" stroke-width="1"/><line x1="100.7" y1="270.50" x2="1050.7" y2="270.50" stroke="rgba(200,205,215,0.11)" stroke-width="1"/><line x1="100.7" y1="313.50" x2="1050.7" y2="313.50" stroke="rgba(200,205,215,0.11)" stroke-width="1"/><line x1="100.7" y1="356.50" x2="1050.7" y2="356.50" stroke="rgba(200,205,215,0.11)" stroke-width="1"/><line x1="136.50" y1="98.5" x2="136.50" y2="364.5" stroke="rgba(200,205,215,0.11)" stroke-width="1"/><line x1="326.50" y1="98.5" x2="326.50" y2="364.5" stroke="rgba(200,205,215,0.11)" stroke-width="1"/><line x1="516.50" y1="98.5" x2="516.50" y2="364.5" stroke="rgba(200,205,215,0.11)" stroke-width="1"/><line x1="706.50" y1="98.5" x2="706.50" y2="364.5" stroke="rgba(200,205,215,0.11)" stroke-width="1"/><line x1="896.50" y1="98.5" x2="896.50" y2="364.5" stroke="rgba(200,205,215,0.11)" stroke-width="1"/><path d="M669.80,356.50 L669.80,127.60 L765.20,141.80 L859.90,257.10 L1002.80,162.00 L1002.80,356.50 Z" fill="rgba(224,86,96,0.085)"/><polyline points="669.80,127.60 765.20,141.80 859.90,257.10 1002.80,162.00" fill="none" stroke="#e05660" stroke-width="2.2" stroke-linejoin="round"/><circle cx="669.80" cy="127.60" r="3.2" fill="#e05660"/><circle cx="765.20" cy="141.80" r="3.2" fill="#e05660"/><circle cx="859.90" cy="257.10" r="3.2" fill="#e05660"/><circle cx="1002.80" cy="162.00" r="3.2" fill="#e05660"/></svg>
<div class="t" style="right:2114.5px;top:998.84px;font-size:25px;line-height:25px;color:#ccccdc;font-weight:400;text-align:right;letter-spacing:0.35px;-webkit-text-stroke:0.3px #ccccdc;"><span style="letter-spacing:-1.4px">1</span>20 K</div>
<div class="t" style="right:2114.5px;top:1041.84px;font-size:25px;line-height:25px;color:#ccccdc;font-weight:400;text-align:right;letter-spacing:0.35px;-webkit-text-stroke:0.3px #ccccdc;"><span style="letter-spacing:-1.4px">1</span>00 K</div>
<div class="t" style="right:2114.5px;top:1084.84px;font-size:25px;line-height:25px;color:#ccccdc;font-weight:400;text-align:right;letter-spacing:0.35px;-webkit-text-stroke:0.3px #ccccdc;">80 K</div>
<div class="t" style="right:2114.5px;top:1127.84px;font-size:25px;line-height:25px;color:#ccccdc;font-weight:400;text-align:right;letter-spacing:0.35px;-webkit-text-stroke:0.3px #ccccdc;">60 K</div>
<div class="t" style="right:2114.5px;top:1170.84px;font-size:25px;line-height:25px;color:#ccccdc;font-weight:400;text-align:right;letter-spacing:0.35px;-webkit-text-stroke:0.3px #ccccdc;">40 K</div>
<div class="t" style="right:2114.5px;top:1213.84px;font-size:25px;line-height:25px;color:#ccccdc;font-weight:400;text-align:right;letter-spacing:0.35px;-webkit-text-stroke:0.3px #ccccdc;">20 K</div>
<div class="t" style="right:2114.5px;top:1256.84px;font-size:25px;line-height:25px;color:#ccccdc;font-weight:400;text-align:right;letter-spacing:0.35px;-webkit-text-stroke:0.3px #ccccdc;">0</div>
<div class="t" style="left:-139.4px;width:600px;top:1286.84px;font-size:25px;line-height:25px;color:#ccccdc;font-weight:400;text-align:center;letter-spacing:0.8px;-webkit-text-stroke:0.3px #ccccdc;">08:47:00</div>
<div class="t" style="left:50.44999999999999px;width:600px;top:1286.84px;font-size:25px;line-height:25px;color:#ccccdc;font-weight:400;text-align:center;letter-spacing:0.8px;-webkit-text-stroke:0.3px #ccccdc;">08:48:00</div>
<div class="t" style="left:240.29999999999995px;width:600px;top:1286.84px;font-size:25px;line-height:25px;color:#ccccdc;font-weight:400;text-align:center;letter-spacing:0.8px;-webkit-text-stroke:0.3px #ccccdc;">08:49:00</div>
<div class="t" style="left:430.15px;width:600px;top:1286.84px;font-size:25px;line-height:25px;color:#ccccdc;font-weight:400;text-align:center;letter-spacing:0.8px;-webkit-text-stroke:0.3px #ccccdc;">08:50:00</div>
<div class="t" style="left:620.0px;width:600px;top:1286.84px;font-size:25px;line-height:25px;color:#ccccdc;font-weight:400;text-align:center;letter-spacing:0.8px;-webkit-text-stroke:0.3px #ccccdc;">08:51:00</div>
<div class="b" style="left:50px;top:1345.6px;width:28px;height:9px;background:#e05660;border-radius:4.5px;"></div>
<div class="t" style="left:93.5px;top:1337.04px;font-size:25px;line-height:25px;color:#ccccdc;font-weight:400;letter-spacing:0.42px;-webkit-text-stroke:0.3px #ccccdc;">total alloc_objects = 342 K / max = 106 K</div>
<div class="b" style="left:1125px;top:915px;width:1085px;height:480px;background:#1b1c20;border-radius:4px;box-shadow:inset 0 0 0 2px #313237;"></div>
<div class="t" style="left:1143.7px;top:934.03px;font-size:29.5px;line-height:29.5px;color:#ccccdc;font-weight:400;letter-spacing:0.515px;-webkit-text-stroke:0.8px #ccccdc;">alloc_space (memory)</div>
<div class="t" style="left:1856.8px;top:936.81px;font-size:23.5px;line-height:23.5px;color:#799ef8;font-weight:400;letter-spacing:1.2px;-webkit-text-stroke:0.75px #799ef8;">Labels</div>
<div class="t" style="left:1953.6px;top:936.81px;font-size:23.5px;line-height:23.5px;color:#799ef8;font-weight:400;letter-spacing:1.3px;-webkit-text-stroke:0.75px #799ef8;">Flame graph</div>
<svg class="b" style="left:2117px;top:937px;" width="25" height="24" viewBox="0 0 25 24"><polygon points="12.5,2 15.6,8.7 23,9.6 17.5,14.6 19,22 12.5,18.3 6,22 7.5,14.6 2,9.6 9.4,8.7" fill="none" stroke="#ccccdc" stroke-width="2.2" stroke-linejoin="round"/></svg>
<svg class="b" style="left:1125px;top:915px;" width="1085" height="480" viewBox="0 0 1085 480"><line x1="116.5" y1="104.50" x2="1050.5" y2="104.50" stroke="rgba(200,205,215,0.11)" stroke-width="1"/><line x1="116.5" y1="140.50" x2="1050.5" y2="140.50" stroke="rgba(200,205,215,0.11)" stroke-width="1"/><line x1="116.5" y1="176.50" x2="1050.5" y2="176.50" stroke="rgba(200,205,215,0.11)" stroke-width="1"/><line x1="116.5" y1="212.50" x2="1050.5" y2="212.50" stroke="rgba(200,205,215,0.11)" stroke-width="1"/><line x1="116.5" y1="248.50" x2="1050.5" y2="248.50" stroke="rgba(200,205,215,0.11)" stroke-width="1"/><line x1="116.5" y1="284.50" x2="1050.5" y2="284.50" stroke="rgba(200,205,215,0.11)" stroke-width="1"/><line x1="116.5" y1="320.50" x2="1050.5" y2="320.50" stroke="rgba(200,205,215,0.11)" stroke-width="1"/><line x1="116.5" y1="356.50" x2="1050.5" y2="356.50" stroke="rgba(200,205,215,0.11)" stroke-width="1"/><line x1="151.50" y1="98.29999999999995" x2="151.50" y2="364.4000000000001" stroke="rgba(200,205,215,0.11)" stroke-width="1"/><line x1="338.50" y1="98.29999999999995" x2="338.50" y2="364.4000000000001" stroke="rgba(200,205,215,0.11)" stroke-width="1"/><line x1="525.50" y1="98.29999999999995" x2="525.50" y2="364.4000000000001" stroke="rgba(200,205,215,0.11)" stroke-width="1"/><line x1="712.50" y1="98.29999999999995" x2="712.50" y2="364.4000000000001" stroke="rgba(200,205,215,0.11)" stroke-width="1"/><line x1="899.50" y1="98.29999999999995" x2="899.50" y2="364.4000000000001" stroke="rgba(200,205,215,0.11)" stroke-width="1"/><path d="M676.00,356.40 L676.00,230.90 L769.80,190.80 L862.60,128.70 L1003.10,125.10 L1003.10,356.40 Z" fill="rgba(101,146,235,0.085)"/><polyline points="676.00,230.90 769.80,190.80 862.60,128.70 1003.10,125.10" fill="none" stroke="#6592eb" stroke-width="2.2" stroke-linejoin="round"/><circle cx="676.00" cy="230.90" r="3.2" fill="#6592eb"/><circle cx="769.80" cy="190.80" r="3.2" fill="#6592eb"/><circle cx="862.60" cy="128.70" r="3.2" fill="#6592eb"/><circle cx="1003.10" cy="125.10" r="3.2" fill="#6592eb"/></svg>
<div class="t" style="right:998px;top:1004.74px;font-size:25px;line-height:25px;color:#ccccdc;font-weight:400;text-align:right;letter-spacing:0.35px;-webkit-text-stroke:0.3px #ccccdc;">28 MiB</div>
<div class="t" style="right:998px;top:1040.74px;font-size:25px;line-height:25px;color:#ccccdc;font-weight:400;text-align:right;letter-spacing:0.35px;-webkit-text-stroke:0.3px #ccccdc;">24 MiB</div>
<div class="t" style="right:998px;top:1076.74px;font-size:25px;line-height:25px;color:#ccccdc;font-weight:400;text-align:right;letter-spacing:0.35px;-webkit-text-stroke:0.3px #ccccdc;">20 MiB</div>
<div class="t" style="right:998px;top:1112.74px;font-size:25px;line-height:25px;color:#ccccdc;font-weight:400;text-align:right;letter-spacing:0.35px;-webkit-text-stroke:0.3px #ccccdc;"><span style="letter-spacing:-1.4px">1</span>6 MiB</div>
<div class="t" style="right:998px;top:1148.74px;font-size:25px;line-height:25px;color:#ccccdc;font-weight:400;text-align:right;letter-spacing:0.35px;-webkit-text-stroke:0.3px #ccccdc;"><span style="letter-spacing:-1.4px">1</span>2 MiB</div>
<div class="t" style="right:998px;top:1184.74px;font-size:25px;line-height:25px;color:#ccccdc;font-weight:400;text-align:right;letter-spacing:0.35px;-webkit-text-stroke:0.3px #ccccdc;">8 MiB</div>
<div class="t" style="right:998px;top:1220.74px;font-size:25px;line-height:25px;color:#ccccdc;font-weight:400;text-align:right;letter-spacing:0.35px;-webkit-text-stroke:0.3px #ccccdc;">4 MiB</div>
<div class="t" style="right:998px;top:1256.74px;font-size:25px;line-height:25px;color:#ccccdc;font-weight:400;text-align:right;letter-spacing:0.35px;-webkit-text-stroke:0.3px #ccccdc;">0 B</div>
<div class="t" style="left:976.5px;width:600px;top:1286.84px;font-size:25px;line-height:25px;color:#ccccdc;font-weight:400;text-align:center;letter-spacing:0.8px;-webkit-text-stroke:0.3px #ccccdc;">08:47:00</div>
<div class="t" style="left:1163.4px;width:600px;top:1286.84px;font-size:25px;line-height:25px;color:#ccccdc;font-weight:400;text-align:center;letter-spacing:0.8px;-webkit-text-stroke:0.3px #ccccdc;">08:48:00</div>
<div class="t" style="left:1350.3px;width:600px;top:1286.84px;font-size:25px;line-height:25px;color:#ccccdc;font-weight:400;text-align:center;letter-spacing:0.8px;-webkit-text-stroke:0.3px #ccccdc;">08:49:00</div>
<div class="t" style="left:1537.2px;width:600px;top:1286.84px;font-size:25px;line-height:25px;color:#ccccdc;font-weight:400;text-align:center;letter-spacing:0.8px;-webkit-text-stroke:0.3px #ccccdc;">08:50:00</div>
<div class="t" style="left:1724.1px;width:600px;top:1286.84px;font-size:25px;line-height:25px;color:#ccccdc;font-weight:400;text-align:center;letter-spacing:0.8px;-webkit-text-stroke:0.3px #ccccdc;">08:51:00</div>
<div class="b" style="left:1151px;top:1345.6px;width:28px;height:9px;background:#6592eb;border-radius:4.5px;"></div>
<div class="t" style="left:1194.5px;top:1337.04px;font-size:25px;line-height:25px;color:#ccccdc;font-weight:400;letter-spacing:0.455px;-webkit-text-stroke:0.3px #ccccdc;">total alloc_space = 83.0 MiB / max = 25.6 MiB</div>
</body></html>
